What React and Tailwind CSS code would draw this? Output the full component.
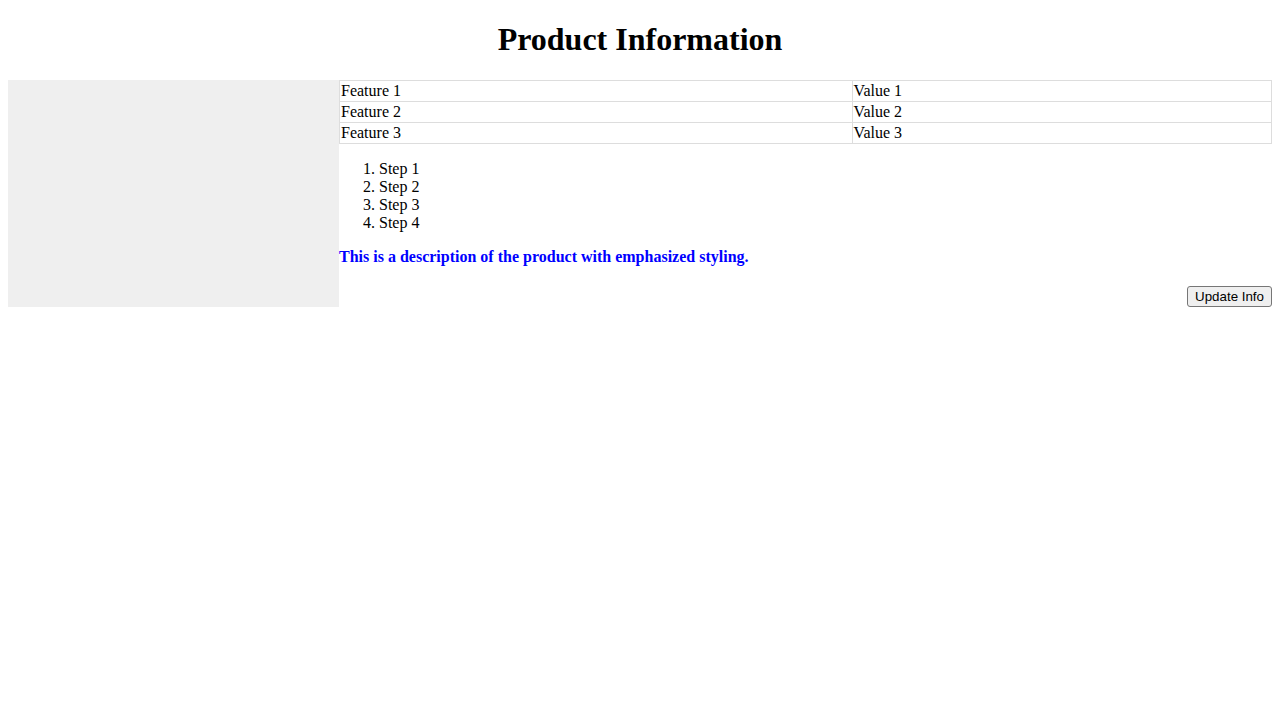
export default function App() {
    const rows = [
        ["Feature 1", "Value 1"],
        ["Feature 2", "Value 2"],
        ["Feature 3", "Value 3"],
    ];
    const steps = ["Step 1", "Step 2", "Step 3", "Step 4"];

    return (
        <div className="px-2 font-['Liberation_Serif',serif] text-base leading-[normal] text-black bg-white min-h-screen">
            <h1 className="text-center text-[32px] font-bold leading-[normal] pt-[21.44px] mb-[21.44px]">
                Product Information
            </h1>

            <div className="flex items-stretch">
                {/* sidebar */}
                <div className="w-[331px] shrink-0 bg-[#efefef]"></div>

                <div className="flex-1 min-w-0">
                    <table className="w-full border-collapse">
                        <tbody>
                            {rows.map(([feature, value]) => (
                                <tr key={feature}>
                                    <td className="w-[55%] border border-[#dddddd] p-px">{feature}</td>
                                    <td className="border border-[#dddddd] p-px">{value}</td>
                                </tr>
                            ))}
                        </tbody>
                    </table>

                    <ol className="list-decimal pl-10 my-4">
                        {steps.map((step) => (
                            <li key={step}>{step}</li>
                        ))}
                    </ol>

                    <p className="my-4 font-bold text-[#0000ff]">
                        This is a description of the product with emphasized styling.
                    </p>

                    <div className="mt-5 flex justify-end">
                        <button
                            type="button"
                            className="font-['Liberation_Sans',Arial,sans-serif] text-[13.333px] leading-[normal] px-[7px] py-[2px] border border-[#767676] rounded-[3px] bg-[#efefef] text-black"
                        >
                            Update Info
                        </button>
                    </div>
                </div>
            </div>
        </div>
    );
}
